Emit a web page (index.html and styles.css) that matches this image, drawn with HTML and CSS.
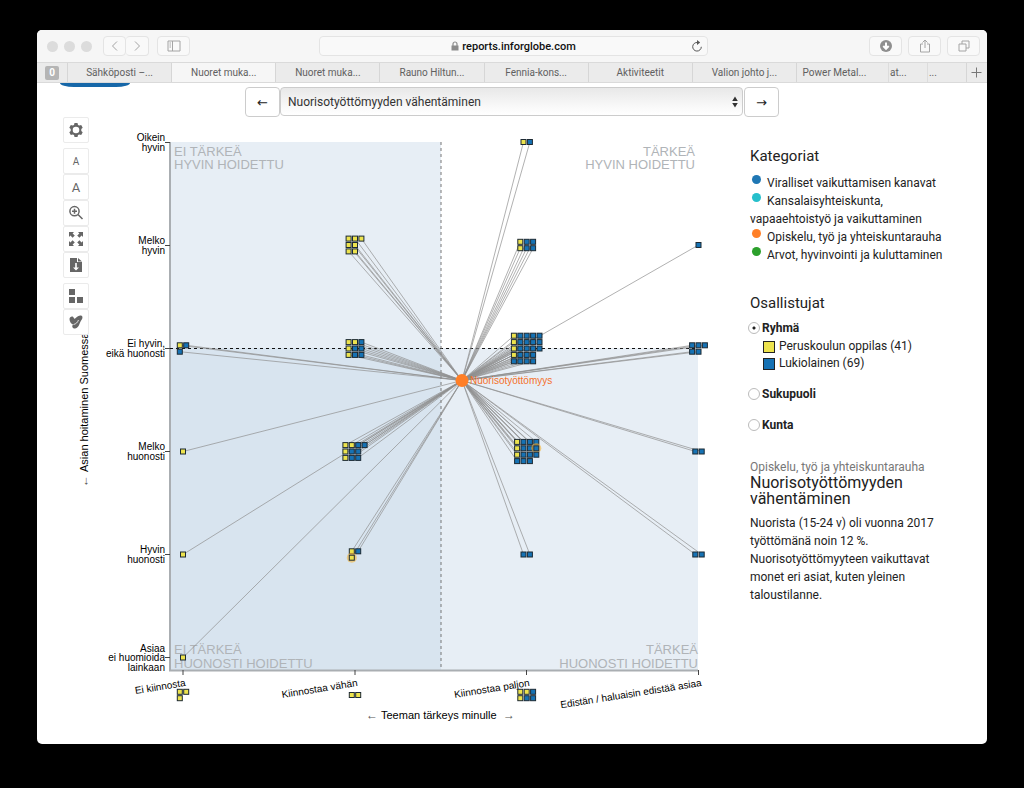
FILE: index.html
```html
<!DOCTYPE html>
<html lang="fi">
<head>
<meta charset="utf-8">
<meta name="viewport" content="width=device-width, initial-scale=1">
<title>Nuorisotyöttömyyden vähentäminen</title>
<link rel="stylesheet" href="styles.css">
</head>
<body>
<div class="window">
  <header class="toolbar">
    <div class="toolbar-left">
      <div class="lights"><span class="light"></span><span class="light"></span><span class="light"></span></div>
      <div class="nav-pair">
        <button class="bar-button" type="button" aria-label="Takaisin"><svg width="12" height="14" viewBox="0 0 12 14"><path d="M8 2.500 3.500 7 8 11.500"/></svg></button>
        <button class="bar-button" type="button" aria-label="Eteenpäin"><svg width="12" height="14" viewBox="0 0 12 14"><path d="M4 2.500 8.500 7 4 11.500"/></svg></button>
      </div>
      <button class="bar-button wide" type="button" aria-label="Sivupalkki"><svg width="14" height="12" viewBox="0 0 14 12"><path d="M1 1h12v10H1zM5.500 1v10M2.500 3h1.500M2.500 5h1.500M2.500 7h1.500"/></svg></button>
    </div>
    <div class="address">
      <span class="address-text"><svg width="8" height="10" viewBox="0 0 8 10"><path d="M2 5V3a2 2 0 0 1 4 0v2" fill="none" stroke="#8b8b8b" stroke-width="1.200"/><path d="M.5 4.500h7V9.500h-7z" fill="#8b8b8b"/></svg>reports.inforglobe.com</span>
      <button class="reload" type="button" aria-label="Lataa uudelleen"><svg width="12" height="13" viewBox="0 0 12 13"><path d="M6.500 2.500a4.300 4.300 0 1 0 3.800 4.300" fill="none" stroke="#555"/><path d="M6 0v5l3.200-2.500z" fill="#555"/></svg></button>
    </div>
    <div class="toolbar-right">
      <button class="bar-button wide" type="button" aria-label="Lataukset"><svg width="14" height="14" viewBox="0 0 14 14"><circle cx="7" cy="7" r="6" class="solid"/><path d="M7 3.500v6M4.300 7 7 9.800 9.700 7" class="knock"/></svg></button>
      <button class="bar-button wide" type="button" aria-label="Jaa"><svg width="12" height="14" viewBox="0 0 12 14"><path d="M4 5H1.500v8h9V5H8M6 9V1.500M3.500 3.500 6 1l2.500 2.500"/></svg></button>
      <button class="bar-button wide" type="button" aria-label="Välilehdet"><svg width="12" height="12" viewBox="0 0 12 12"><path d="M1 4h7v7H1zM4 4V1h7v7H8"/></svg></button>
    </div>
  </header>
  <nav class="tabs" aria-label="Välilehdet">
    <button class="tab pinned" type="button"><span class="pin-mark">0</span></button>
    <button class="tab" type="button">Sähköposti –...</button>
    <button class="tab active" type="button">Nuoret muka...</button>
    <button class="tab" type="button">Nuoret muka...</button>
    <button class="tab" type="button">Rauno Hiltun...</button>
    <button class="tab" type="button">Fennia-kons...</button>
    <button class="tab" type="button">Aktiviteetit</button>
    <button class="tab" type="button">Valion johto j...</button>
    <button class="tab large" type="button">Power Metal...</button>
    <button class="tab small" type="button">at...</button>
    <button class="tab small" type="button">...</button>
    <button class="tab plus" type="button" aria-label="Uusi välilehti"><svg width="11" height="11" viewBox="0 0 11 11"><path d="M5.500 0.500v10M.5 5.500h10" stroke="#777"/></svg></button>
  </nav>

  <div class="page-head">
    <div class="chip"></div>
    <div class="switcher">
      <button class="step" type="button" aria-label="Edellinen">←</button>
      <div class="select-wrap">
        <select class="topic" aria-label="Teema"><option>Nuorisotyöttömyyden vähentäminen</option></select>
        <svg class="select-arrows" width="6" height="12" viewBox="0 0 6 12"><path d="M3 0.500 5.800 5H.2zM3 11.500.2 7h5.600z" fill="#333"/></svg>
      </div>
      <button class="step" type="button" aria-label="Seuraava">→</button>
    </div>
  </div>

  <main class="content">
    <section class="board">
      <div class="tools">
        <div class="tool-group">
          <button class="tool" type="button" aria-label="Asetukset"><svg width="16" height="16" viewBox="0 0 16 16"><path fill-rule="evenodd" d="M6.500 1h3l.5 1.900 1.200.7 2-.6 1.500 2.700L13.300 7v2l1.400 1.300-1.500 2.700-2-.6-1.200.7-.5 1.900h-3L6 13.100l-1.200-.7-2 .6-1.500-2.700L2.700 9V7L1.300 5.700 2.800 3l2 .6L6 2.900zM8 4.700a3.300 3.300 0 1 0 0 6.600 3.300 3.300 0 0 0 0-6.600z"/></svg></button>
        </div>
        <div class="tool-group">
          <button class="tool letter-small" type="button" aria-label="Pienennä tekstiä">A</button>
          <button class="tool letter-big" type="button" aria-label="Suurenna tekstiä">A</button>
          <button class="tool" type="button" aria-label="Suurenna"><svg width="16" height="16" viewBox="0 0 16 16"><circle cx="6.500" cy="6.200" r="4.600" fill="none" stroke="#666" stroke-width="1.500"/><path d="m10 9.500 4.500 4.500M4 6.200h5M6.500 3.700v5" stroke="#666" stroke-width="1.500"/></svg></button>
          <button class="tool" type="button" aria-label="Koko näyttö"><svg width="16" height="16" viewBox="0 0 16 16"><path d="M1 1h5L4.600 2.400 6.800 4.600 4.600 6.800 2.400 4.600 1 6zM15 1v5l-1.400-1.400-2.200 2.200-2.200-2.200 2.200-2.200L10 1zM1 15v-5l1.400 1.400 2.200-2.200 2.200 2.200-2.200 2.200L6 15zM15 15h-5l1.400-1.400-2.200-2.200 2.200-2.200 2.200 2.200L15 10z"/></svg></button>
          <button class="tool" type="button" aria-label="Lataa tiedosto"><svg width="16" height="16" viewBox="0 0 16 16"><path fill-rule="evenodd" d="M2 1h7v4h5v10H2zM7.200 6v4.500H5L8 13.500l3-3H8.800V6z"/><path d="M10 1l4 3.500h-4z"/></svg></button>
        </div>
        <div class="tool-group">
          <button class="tool" type="button" aria-label="Ryhmittely"><svg width="16" height="16" viewBox="0 0 16 16"><path d="M1 1h6v6H1zM1 9h6v6H1zM9 9h6v6H9z"/></svg></button>
          <button class="tool" type="button" aria-label="Yhteydet"><svg width="16" height="16" viewBox="0 0 16 16"><path d="M1.500 5c0-2.500 3.500-3.500 4.200-1.200.4 1.200 1.600 1 2.300 0C9.500 1.500 13.500.5 14.300 2.500c.8 2-1 3.500-2 5.500-1 2.500-2.300 6.500-5.300 6.500-2.500 0-3.500-2-2-4C3 10 1.500 7.500 1.500 5z"/><path d="M5.500 10.500c2.500-.5 4-2 5-4.500" fill="none" stroke="#fff" stroke-width=".8"/></svg></button>
        </div>
      </div>

      <svg class="chart" viewBox="63 117 650 610" role="img" aria-label="Teeman tärkeys ja hoitaminen">
        <rect class="shade" x="170" y="142" width="271" height="206"/>
        <rect class="shade-deep" x="170" y="348" width="271" height="322"/>
        <rect class="shade" x="441" y="348" width="257" height="322"/>
        <g class="quadrant">
          <text x="174" y="156">EI TÄRKEÄ</text><text x="174" y="169">HYVIN HOIDETTU</text>
          <text class="end" x="695" y="156">TÄRKEÄ</text><text class="end" x="695" y="169">HYVIN HOIDETTU</text>
          <text x="174" y="654">EI TÄRKEÄ</text><text x="174" y="668">HUONOSTI HOIDETTU</text>
          <text class="end" x="698" y="654">TÄRKEÄ</text><text class="end" x="698" y="668">HUONOSTI HOIDETTU</text>
        </g>
        <path class="axis" d="M170 142v528.500h528"/>
        <path class="tick" d="M165 142.500h5M165 245.500h5M165 348.500h5M165 451.500h5M165 554.500h5M165 657.500h5M183 670v5M355 670v5M526.500 670v5M698.500 670v5"/>
        <path class="dash-h" d="M170 348.500h528"/>
        <path class="dash-v" d="M441 142v528"/>
        <g class="label end">
          <text x="165" y="141">Oikein</text><text x="165" y="151">hyvin</text>
          <text x="165" y="244">Melko</text><text x="165" y="254">hyvin</text>
          <text x="165" y="347">Ei hyvin,</text><text x="165" y="357">eikä huonosti</text>
          <text x="165" y="450">Melko</text><text x="165" y="460">huonosti</text>
          <text x="165" y="553">Hyvin</text><text x="165" y="563">huonosti</text>
          <text x="165" y="652">Asiaa</text><text x="165" y="661">ei huomioida</text><text x="165" y="671">lainkaan</text>
          <text transform="translate(186 686) rotate(-9)">Ei kiinnosta</text>
          <text transform="translate(358 686) rotate(-9)">Kiinnostaa vähän</text>
          <text transform="translate(530 686) rotate(-9)">Kiinnostaa paljon</text>
          <text transform="translate(702 686) rotate(-9)">Edistän / haluaisin edistää asiaa</text>
        </g>
        <g class="axis-title">
          <text x="381" y="719">Teeman tärkeys minulle</text>
          <text class="arrow" x="366" y="719">←</text><text class="arrow" x="503" y="719">→</text>
          <text transform="translate(88 472) rotate(-90)">Asian hoitaminen Suomessa</text>
          <text class="arrow" transform="translate(88 487) rotate(-90)">←</text>
        </g>
        <g id="links" class="links"></g>
        <g id="people"></g>
        <circle class="hub" cx="462" cy="380.500" r="6.500"/>
        <text class="hub-label" x="470" y="384">Nuorisotyöttömyys</text>
      </svg>
    </section>

    <aside class="side">
      <h2 class="heading">Kategoriat</h2>
      <ul class="categories">
        <li><span class="dot blue"></span>Viralliset vaikuttamisen kanavat</li>
        <li><span class="dot cyan"></span>Kansalaisyhteiskunta, vapaaehtoistyö ja vaikuttaminen</li>
        <li><span class="dot orange"></span>Opiskelu, työ ja yhteiskuntarauha</li>
        <li><span class="dot green"></span>Arvot, hyvinvointi ja kuluttaminen</li>
      </ul>
      <h2 class="heading">Osallistujat</h2>
      <div class="groups">
        <label class="choice"><input type="radio" name="group" checked>Ryhmä</label>
        <ul class="legend">
          <li><span class="box yellow"></span>Peruskoulun oppilas (41)</li>
          <li><span class="box navy"></span>Lukiolainen (69)</li>
        </ul>
        <label class="choice"><input type="radio" name="group">Sukupuoli</label>
        <label class="choice"><input type="radio" name="group">Kunta</label>
      </div>
      <p class="kicker">Opiskelu, työ ja yhteiskuntarauha</p>
      <h2 class="topic-title">Nuorisotyöttömyyden vähentäminen</h2>
      <p class="description">Nuorista (15-24 v) oli vuonna 2017 työttömänä noin 12 %. Nuorisotyöttömyyteen vaikuttavat monet eri asiat, kuten yleinen taloustilanne.</p>
    </aside>
  </main>
</div>
<script src="chart.js"></script>
</body>
</html>
```

FILE: chart.js
```js
// Each cluster: centre x, centre y, rows of people (Y = yellow, B = blue, lower case = highlighted).
const clusters = [
  [526.7, 142, ["YB"]],
  [355, 245, ["YYY", "YY", "YY"]],
  [526.7, 245, ["YBB", "YBB"]],
  [698.5, 245, ["B"]],
  [183, 348.5, ["YB", "B"]],
  [355, 348.5, ["YYB", "YBB", "YBB"]],
  [526.7, 348.5, ["YBBBB", "YBBBB", "YBBBB", "YBBB", "BBBB"]],
  [698.5, 348.5, ["BBB", "BB"]],
  [183, 451.5, ["Y"]],
  [355, 451.5, ["YYBB", "YBB", "YBB"]],
  [526.7, 451.5, ["YBBB", "YBBb", "YBBB", "BBB"]],
  [698.5, 451.5, ["BB"]],
  [183, 554.5, ["Y"]],
  [355, 554.5, ["YB", "y"]],
  [526.7, 554.5, ["BB"]],
  [698.5, 554.5, ["BB"]],
  [183, 657.5, ["Y"]]
];
// People who answered only one of the two questions sit below the axis without a link.
const outside = [
  [183, 695, ["YY", "Y"]],
  [355, 695, ["YY"]],
  [526.7, 695, ["YYB", "YBB"]]
];
const hub = { x: 462, y: 380.5 };
const pitch = 6.4;
const side = 5;

function add(parent, name, attributes) {
  const node = document.createElementNS("http://www.w3.org/2000/svg", name);
  for (const key in attributes) node.setAttribute(key, attributes[key]);
  parent.appendChild(node);
}

function draw(list, linked) {
  const people = document.getElementById("people");
  const links = document.getElementById("links");
  for (const [cx, cy, rows] of list) {
    const columns = rows[0].length;
    rows.forEach((row, r) => {
      [...row].forEach((kind, c) => {
        const x = cx + (c - (columns - 1) / 2) * pitch;
        const y = cy + (r - (rows.length - 1) / 2) * pitch;
        if (linked) add(links, "line", { x1: x, y1: y, x2: hub.x, y2: hub.y });
        if (kind === kind.toLowerCase()) {
          add(people, "circle", { cx: x, cy: y, r: 5, class: "glow" });
        }
        const color = kind.toUpperCase() === "Y" ? "yellow" : "navy";
        add(people, "rect", { x: x - side / 2, y: y - side / 2, width: side, height: side, class: "person " + color });
      });
    });
  }
}

draw(clusters, true);
draw(outside, false);
```

FILE: styles.css
```css
* { box-sizing: border-box; }
body { margin: 0; padding: 30px 37px 43px 37px; background: #000; font-family: Roboto, "Liberation Sans", sans-serif; color: #222; }
button { font: inherit; color: inherit; margin: 0; padding: 0; }
ul { list-style: none; margin: 0; padding: 0; }
.window { background: #fff; border-radius: 5px; overflow: hidden; }

.toolbar { display: grid; grid-template-columns: 1fr minmax(0, 389px) 1fr; align-items: center; height: 32px; padding: 0 7px 0 10px; background: #f6f6f6; }
.toolbar-left, .toolbar-right { display: flex; align-items: center; }
.toolbar-left { gap: 8px; }
.toolbar-right { justify-content: flex-end; gap: 6px; }
.lights { display: flex; gap: 6px; margin-right: 3px; }
.light { width: 11px; height: 11px; border-radius: 50%; background: #dcdcdc; }
.nav-pair { display: flex; }
.bar-button { display: flex; align-items: center; justify-content: center; width: 23px; height: 20px; border: 1px solid #e4e4e4; border-radius: 4px; background: #f9f9f9; }
.nav-pair .bar-button + .bar-button { border-left: 0; }
.bar-button.wide { width: 33px; }
.bar-button path { fill: none; stroke: #a4a4a4; }
.bar-button .solid { fill: #8f8f8f; }
.bar-button .knock { stroke: #fff; stroke-width: 2; }
.address { display: flex; align-items: center; height: 20px; border: 1px solid #e4e4e4; border-radius: 4px; background: #f9f9f9; font-size: 11px; font-weight: 500; color: #111; }
.address-text { flex: 1; display: flex; align-items: center; justify-content: center; gap: 3px; padding-left: 16px; }
.reload { display: flex; border: 0; background: none; margin-right: 4px; }

.tabs { display: flex; height: 21px; border-top: 1px solid #dadada; border-bottom: 1px solid #dadada; background: #ebebeb; font-size: 10px; color: #606060; }
.tab { flex: 1 1 0; min-width: 0; border: 0; border-right: 1px solid #d6d6d6; background: none; overflow: hidden; white-space: nowrap; }
.tab.active { background: #f6f6f6; }
.tab.pinned { flex: 0 0 31px; display: flex; align-items: center; justify-content: center; }
.tab.large { flex: 0 0 91px; padding-right: 16px; border-right: 0; }
.tab.small { flex: 0 0 39px; padding-left: 1px; border-right: 0; border-left: 1px solid #dcdcdc; text-align: left; }
.tab.plus { flex: 0 0 21px; display: flex; align-items: center; justify-content: center; border-right: 0; border-left: 1px solid #d6d6d6; }
.pin-mark { width: 14px; height: 14px; border-radius: 2px; background: #b5b5b5; color: #fff; font: bold 10px/14px Roboto, sans-serif; }

.page-head { display: grid; grid-template-columns: 1fr minmax(0, 534px) 1fr; }
.chip { width: 70px; height: 4px; margin-left: 23px; border-radius: 0 0 14px 14px / 0 0 4px 4px; background: #1667a8; }
.switcher { display: flex; padding-top: 4px; }
.step { flex: 0 0 35px; height: 30px; border: 1px solid #ccc; border-radius: 4px; background: #fff; font: 13px "DejaVu Sans", sans-serif; color: #222; }
.select-wrap { position: relative; flex: 1; margin-right: 1px; }
.topic { appearance: none; width: 100%; height: 29px; padding: 0 20px 0 7px; border: 1px solid #ccc; border-radius: 4px; background: linear-gradient(#e8e8e8, #f9f9f9 70%, #fff); color: #333; font: 12px Roboto, "Liberation Sans", sans-serif; }
.select-arrows { position: absolute; right: 5px; top: 9px; pointer-events: none; }

.content { display: grid; grid-template-columns: minmax(0, 1fr) 200px; gap: 37px; padding: 0 37px 17px 26px; }
.board { display: grid; grid-template-columns: 26px minmax(0, 1fr); align-items: start; }
.tools { grid-column: 1; grid-row: 1; z-index: 1; display: flex; flex-direction: column; gap: 5px; }
.tool-group { display: flex; flex-direction: column; }
.tool { display: flex; align-items: center; justify-content: center; width: 26px; height: 26px; border: 1px solid #ebebeb; border-radius: 2px; background: #fff; color: #666; }
.tool svg { fill: #666; }
.letter-small { font-size: 10px; }
.letter-big { font-size: 13px; }

.chart { grid-column: 1 / -1; grid-row: 1; display: block; width: 100%; font-family: "Liberation Sans", Arial, sans-serif; }
.shade { fill: #e7eef5; }
.shade-deep { fill: #d8e4ef; }
.end { text-anchor: end; }
.quadrant { font-size: 13px; fill: #b0b4b8; }
.axis { fill: none; stroke: #aaaeb2; stroke-width: 2; }
.tick { fill: none; stroke: #444; }
.dash-h { stroke: #111; stroke-dasharray: 3 3; }
.dash-v { stroke: #777; stroke-dasharray: 3 3; }
.label { font-size: 10px; fill: #000; }
.axis-title { font-size: 11px; fill: #000; }
.arrow { font-size: 12px; fill: #555; }
.links { stroke: #8f8f8f; stroke-width: 0.7; }
.person { stroke: #1d2a33; stroke-width: 1; }
.person.yellow { fill: #ede34e; }
.person.navy { fill: #1672b4; }
.glow { fill: #f3b53a; opacity: 0.6; }
.hub { fill: #ff7f27; }
.hub-label { font-size: 10px; fill: #f4702a; }

.side { padding-top: 29px; font-size: 12px; line-height: 18px; }
.heading { margin: 0; font-size: 15px; line-height: 20px; font-weight: 400; }
.categories { padding: 8px 0 29px; }
.dot { display: inline-block; width: 9px; height: 9px; margin: 0 6px 3px 2px; border-radius: 50%; }
.dot.blue { background: #1f77b4; }
.dot.cyan { background: #26bfcb; }
.dot.orange { background: #ff7f27; }
.dot.green { background: #2ca02c; }
.groups { display: flex; flex-direction: column; gap: 13px; padding-top: 6px; }
.choice { display: flex; align-items: center; gap: 2px; margin-left: -2px; font-weight: 700; }
.choice input { appearance: none; width: 12px; height: 12px; margin: 0; border: 1px solid #bbb; border-radius: 50%; background: #fff; }
.choice input:checked { background: radial-gradient(circle, #222 0 1px, #fff 2px); }
.legend { margin: -12px 0 0 13px; line-height: 17px; }
.legend li { display: flex; align-items: center; gap: 4px; }
.box { width: 12px; height: 12px; border: 1px solid #222; }
.box.yellow { background: #ede34e; }
.box.navy { background: #1672b4; }
.kicker { margin: 25px 0 0; line-height: 16px; color: #777; }
.topic-title { margin: 0; font-size: 16px; line-height: 16px; font-weight: 400; }
.description { margin: 7px 0 0; }
```
